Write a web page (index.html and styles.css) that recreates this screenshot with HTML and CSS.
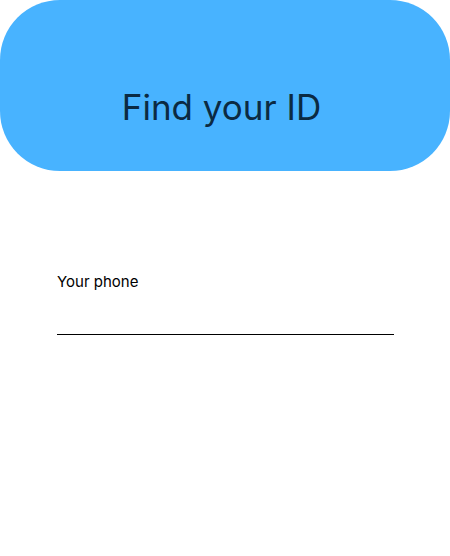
FILE: index.html
```html
<!DOCTYPE html>
<html>
<head>
<meta charset="utf-8">
<link rel="stylesheet" href="styles.css">
</head>
<body>
<div class="page">
  <header class="hero">
    <h1 class="title">Find your ID</h1>
  </header>
  <form class="form">
    <label class="field">
      <span class="label">Your phone</span>
      <input class="input" type="tel">
    </label>
  </form>
</div>
</body>
</html>
```
FILE: styles.css
```css
* { box-sizing: border-box; }
html, body { margin: 0; padding: 0; background: #fff; }
body { font-family: Inter, "Noto Sans", sans-serif; }
.page { width: 450px; height: 556px; }
.hero {
  height: 171px;
  background: #48b3ff;
  border-radius: 60px;
  display: flex;
  align-items: flex-end;
  justify-content: center;
  padding: 0 7px 42px 0;
}
.title {
  margin: 0;
  font-size: 35px;
  font-weight: 400;
  color: #0b2a42;
  line-height: 44px;
}
.form { padding: 102px 56px 0 57px; }
.field { display: flex; flex-direction: column; }
.label { font-size: 15px; line-height: 18px; color: #000; }
.input {
  margin-top: 26px;
  border: none;
  border-bottom: 1px solid #000;
  height: 18px;
  padding: 0;
  outline: none;
  font: inherit;
  background: transparent;
}
```
